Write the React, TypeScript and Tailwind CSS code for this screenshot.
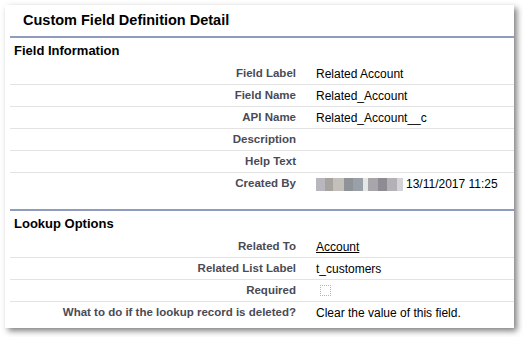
const fieldRows = [
  { label: "Field Label", value: "Related Account" },
  { label: "Field Name", value: "Related_Account" },
  { label: "API Name", value: "Related_Account__c" },
  { label: "Description", value: "" },
  { label: "Help Text", value: "" },
];

const blurBlocks = [
  { w: 9, c: "#b9b6bd" },
  { w: 8, c: "#a7a39f" },
  { w: 11, c: "#c3c0bb" },
  { w: 9, c: "#8f9398" },
  { w: 10, c: "#9aa0a8" },
  { w: 5, c: "#e6e6e6" },
  { w: 10, c: "#a8a6ab" },
  { w: 9, c: "#8e8c92" },
  { w: 10, c: "#b3b1b5" },
  { w: 6, c: "#d4d3d8" },
];

const Row = ({ label, children, last }: any) => (
  <div className={`flex h-[22px] items-center ${last ? "" : "border-b border-[#e3e3e3]"}`}>
    <div className="w-[286px] shrink-0 text-right text-[11.5px] font-bold text-[#4a4a56]">{label}</div>
    <div className="pl-[20px] text-[12px] text-black">{children}</div>
  </div>
);

export default function App() {
  return (
    <div className="h-[337px] w-[523px] bg-white pl-[5px] pt-[5px] font-['Liberation_Sans',Arial,sans-serif]">
      <div className="h-[323px] w-[509px] bg-white pl-[5px] shadow-[3px_3px_6px_rgba(0,0,0,0.5)]">
        <div className="flex h-[31px] items-center pl-[13px] text-[14.5px] font-bold text-black">
          Custom Field Definition Detail
        </div>
        <div className="border-t-2 border-[#8e9dbe]">
          <div className="flex h-[25px] items-center pl-[4px] text-[13px] font-bold text-black">Field Information</div>
          {fieldRows.map((r) => (
            <Row key={r.label} label={r.label}>{r.value}</Row>
          ))}
          <Row label="Created By" last>
            <span className="flex items-center">
              <span className="mr-[3px] flex h-[13px] blur-[0.6px]">
                {blurBlocks.map((b, i) => (
                  <span key={i} className="h-full" style={{ width: b.w, background: b.c }} />
                ))}
              </span>
              13/11/2017 11:25
            </span>
          </Row>
          <div className="h-[14px]" />
        </div>
        <div className="border-t-2 border-[#8e9dbe]">
          <div className="flex h-[25px] items-center pl-[4px] text-[13px] font-bold text-black">Lookup Options</div>
          <Row label="Related To">
            <span className="underline">Account</span>
          </Row>
          <Row label="Related List Label">t_customers</Row>
          <Row label="Required">
            <span className="ml-[4px] block h-[11px] w-[11px] border border-dotted border-[#b5b5b5]" />
          </Row>
          <Row label="What to do if the lookup record is deleted?" last>
            Clear the value of this field.
          </Row>
        </div>
      </div>
    </div>
  );
}
